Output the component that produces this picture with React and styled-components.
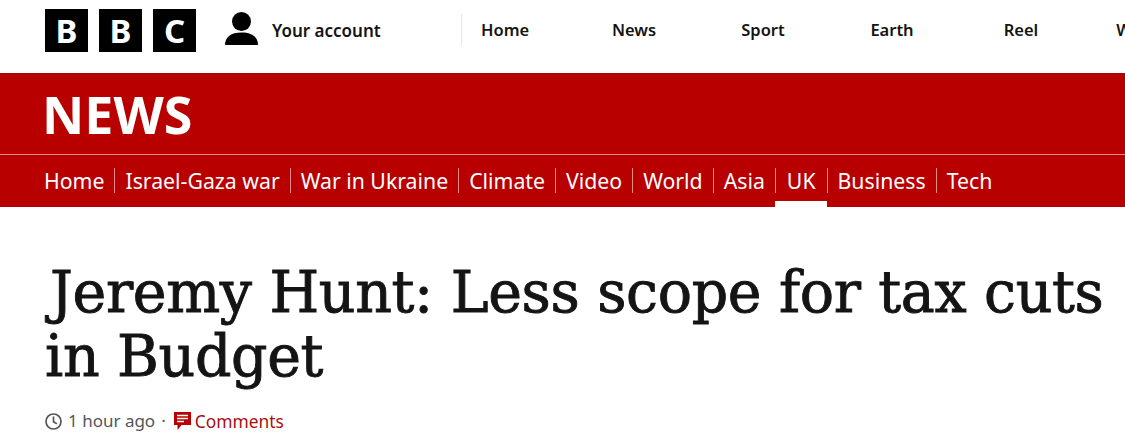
import React from "react";
import styled, { createGlobalStyle } from "styled-components";

const GlobalStyle = createGlobalStyle`
  html, body {
    margin: 0;
    padding: 0;
    background: #fff;
    overflow: hidden;
  }
`;

const Page = styled.div`
  width: 1125px;
  height: 445px;
  overflow: hidden;
  font-family: "Noto Sans", sans-serif;
`;

const TopBar = styled.header`
  display: flex;
  align-items: flex-start;
  height: 73px;
  padding-left: 45px;
  background: #fff;
`;

const Logo = styled.div`
  display: flex;
  flex: none;
  gap: 11px;
  margin-top: 9px;
`;

const LogoBlock = styled.span`
  display: flex;
  align-items: center;
  justify-content: center;
  width: 43px;
  height: 43px;
  background: #000;
  color: #fff;
  font-weight: 700;
  font-size: 33px;
  line-height: 1;
`;

const Account = styled.a`
  display: flex;
  flex: none;
  align-items: center;
  width: 236px;
  height: 33px;
  margin: 12px 0 0 29px;
  gap: 14px;
  color: #141414;
  font-size: 17px;
  font-weight: 600;
  white-space: nowrap;
`;

const AccountLabel = styled.span`
  margin-top: 3px;
`;

const TopNav = styled.nav`
  display: flex;
  flex: none;
  align-items: center;
  height: 32px;
  margin-top: 14px;
  border-left: 1px solid #e6e6e6;
  white-space: nowrap;
`;

const TopLink = styled.a`
  flex: 0 0 129px;
  margin-top: -2px;
  text-align: center;
  color: #141414;
  font-size: 16.5px;
  font-weight: 600;

  &:first-child {
    box-sizing: border-box;
    flex-basis: 107.5px;
    padding-left: 19px;
    text-align: left;
  }
`;

const RedBand = styled.div`
  background: #b80000;
  color: #fff;
`;

const Brand = styled.div`
  height: 81px;
  padding-left: 42px;
  border-bottom: 1px solid #e38a8a;
  font-size: 52px;
  font-weight: 700;
  line-height: 81px;
`;

const SubNav = styled.nav`
  display: flex;
  align-items: flex-start;
  height: 52px;
  padding-left: 33px;
`;

const SubItem = styled.a`
  position: relative;
  height: 52px;
  font-size: 21.25px;
  white-space: nowrap;

  & > span {
    display: block;
    height: 25px;
    margin-top: 13px;
    padding: 0 ${(p) => (p.$active ? "11px" : "10px")};
    line-height: 25px;
    border-left: 1px solid ${(p) => (p.$first ? "transparent" : "#e38a8a")};
  }

  ${(p) =>
    p.$active &&
    `
    &::after {
      content: "";
      position: absolute;
      left: 0;
      right: 0;
      bottom: 0;
      height: 6px;
      background: #fff;
    }
  `}
`;

const Article = styled.main`
  padding: 53px 0 0 45px;
`;

const Headline = styled.h1`
  width: 1075px;
  margin: 0;
  color: #141414;
  font-family: "DejaVu Serif", serif;
  font-size: 57px;
  font-weight: 400;
  line-height: 64px;
  letter-spacing: -0.35px;
  text-indent: 5px;
  -webkit-text-stroke: 0.9px #141414;
`;

const Meta = styled.div`
  display: flex;
  align-items: center;
  margin-top: 21px;
  color: #545658;
  font-size: 17px;
  line-height: 24px;
`;

const MetaDot = styled.span`
  margin: 0 6px;
`;

const CommentLink = styled.a`
  display: flex;
  align-items: center;
  gap: 4px;
  margin-left: 2px;
  color: #a80f0f;
  font-size: 17.4px;
`;

const ClockIcon = styled.svg`
  width: 17px;
  height: 17px;
  margin-right: 6px;
  flex: none;
`;

const CommentIcon = styled.svg`
  width: 17px;
  height: 18px;
  flex: none;
`;

const subItems = ["Home", "Israel-Gaza war", "War in Ukraine", "Climate", "Video", "World", "Asia", "UK", "Business", "Tech"];

export default function App() {
  return (
    <Page>
      <GlobalStyle />
      <TopBar>
        <Logo>
          <LogoBlock>B</LogoBlock>
          <LogoBlock>B</LogoBlock>
          <LogoBlock>C</LogoBlock>
        </Logo>
        <Account>
          <svg width="33" height="33" viewBox="0 0 33 33" fill="#000">
            <circle cx="16.5" cy="9.5" r="9.5" />
            <path d="M0 33c0-8 6-12.5 16.5-12.5S33 25 33 33z" />
          </svg>
          <AccountLabel>Your account</AccountLabel>
        </Account>
        <TopNav>
          <TopLink>Home</TopLink>
          <TopLink>News</TopLink>
          <TopLink>Sport</TopLink>
          <TopLink>Earth</TopLink>
          <TopLink>Reel</TopLink>
          <TopLink>Worklife</TopLink>
        </TopNav>
      </TopBar>
      <RedBand>
        <Brand>NEWS</Brand>
        <SubNav>
          {subItems.map((item, i) => (
            <SubItem key={item} $first={i === 0} $active={item === "UK"}>
              <span>{item}</span>
            </SubItem>
          ))}
        </SubNav>
      </RedBand>
      <Article>
        <Headline>Jeremy Hunt: Less scope for tax cuts in Budget</Headline>
        <Meta>
          <ClockIcon viewBox="0 0 17 17" fill="none" stroke="#545658" strokeWidth="1.7">
            <circle cx="8.5" cy="8.5" r="7.5" />
            <path d="M8.5 3.5v5.2l3.4 2.2" />
          </ClockIcon>
          1 hour ago
          <MetaDot>·</MetaDot>
          <CommentLink>
            <CommentIcon viewBox="0 0 17 18">
              <path fill="#b80000" d="M0 0h17v13H7.5L3.5 18v-5H0z" />
              <path stroke="#fff" strokeWidth="1.4" d="M3 3.5h11M3 6.5h11M3 9.5h7" />
            </CommentIcon>
            Comments
          </CommentLink>
        </Meta>
      </Article>
    </Page>
  );
}
